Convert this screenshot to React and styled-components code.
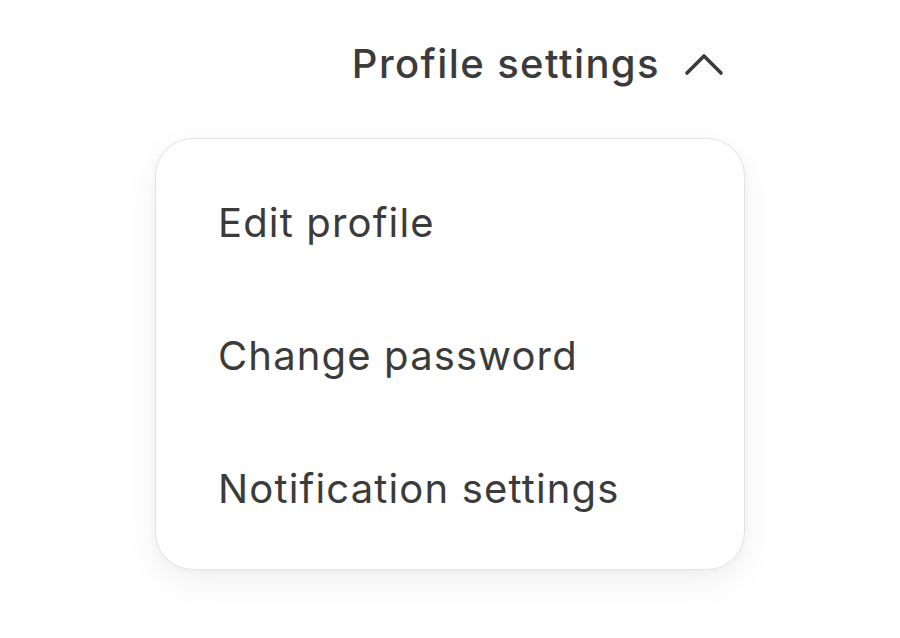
import React from "react";
import styled, { createGlobalStyle } from "styled-components";

const Global = createGlobalStyle`
  html, body { margin: 0; padding: 0; background: #ffffff; }
  body { font-family: Inter, "Noto Sans", sans-serif; color: #3b3b3b; }
`;

const Page = styled.div`
  width: 900px;
  height: 638px;
  display: flex;
  flex-direction: column;
  align-items: center;
  padding-top: 40px;
  box-sizing: border-box;
`;

const Menu = styled.div`
  width: 590px;
  display: flex;
  flex-direction: column;
  gap: 50px;
`;

const Trigger = styled.button`
  align-self: flex-end;
  margin-right: 21px;
  display: flex;
  align-items: center;
  gap: 24px;
  background: none;
  border: none;
  padding: 0;
  font-family: Inter, "Noto Sans", sans-serif;
  font-size: 40px;
  line-height: 48px;
  font-weight: 500;
  letter-spacing: 1.4px;
  color: #3b3b3b;
  cursor: pointer;
`;

const Card = styled.div`
  box-sizing: border-box;
  width: 590px;
  border: 1.5px solid #e2e2e2;
  border-radius: 38px;
  background: #fff;
  box-shadow: 0 12px 36px rgba(0, 0, 0, 0.06), 0 2px 10px rgba(0, 0, 0, 0.03);
  padding: 17px 0 14px;
  display: flex;
  flex-direction: column;
`;

const Item = styled.div`
  padding: 42px 62px;
  font-size: 40px;
  line-height: 49px;
  font-weight: 400;
  letter-spacing: 1.15px;
  color: #3b3b3b;
`;

const Chevron = () => (
  <svg width="40" height="24" viewBox="0 0 40 24" fill="none">
    <polyline
      points="3,21 20,4 37,21"
      stroke="#3b3b3b"
      strokeWidth="3.6"
      strokeLinecap="round"
      strokeLinejoin="round"
    />
  </svg>
);

export default function App() {
  return (
    <>
      <Global />
      <Page>
        <Menu>
          <Trigger>
            Profile settings
            <Chevron />
          </Trigger>
          <Card>
            <Item>Edit profile</Item>
            <Item>Change password</Item>
            <Item>Notification settings</Item>
          </Card>
        </Menu>
      </Page>
    </>
  );
}
